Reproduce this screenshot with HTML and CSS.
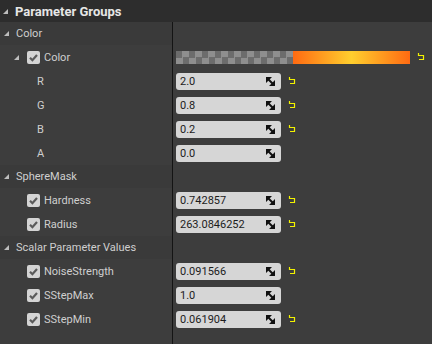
FILE: index.html
```html
<!DOCTYPE html>
<html lang="en">
<head>
    <meta charset="UTF-8">
    <title>Parameter Groups</title>
    <link rel="stylesheet" href="styles.css">
</head>
<body>
    <div class="panel">
        <div class="header"><span class="arrow"></span>Parameter Groups</div>
        <div class="tree">
            <div class="row category">
                <div class="name"><span class="arrow"></span>Color</div>
            </div>
            <div class="row">
                <div class="name sub"><span class="arrow"></span><span class="check"><svg viewBox="0 0 13 13" width="13" height="13"><path d="M3 6.8 L5.4 9.2 L10 4" fill="none" stroke="#5a5a5a" stroke-width="2.2"/></svg></span>Color</div>
                <div class="value">
                    <div class="swatch"><div class="checker"></div><div class="grad"></div></div>
                    <span class="reset"><svg viewBox="0 0 8 8" width="8" height="8"><path d="M1.5 0 V2.5 H6.5 V6.5 H2" fill="none" stroke="#f2f200" stroke-width="1.2"/></svg></span>
                </div>
            </div>
            <div class="row">
                <div class="name channel">R</div>
                <div class="value">
                    <div class="field">2.0<svg class="spin" viewBox="0 0 9 9" width="9" height="9"><path d="M0 0 H6 L0 6 Z M9 9 H3 L9 3 Z" fill="#111"/><path d="M1 1 L8 8" stroke="#111" stroke-width="2"/></svg></div>
                    <span class="reset"><svg viewBox="0 0 8 8" width="8" height="8"><path d="M1.5 0 V2.5 H6.5 V6.5 H2" fill="none" stroke="#f2f200" stroke-width="1.2"/></svg></span>
                </div>
            </div>
            <div class="row">
                <div class="name channel">G</div>
                <div class="value">
                    <div class="field">0.8<svg class="spin" viewBox="0 0 9 9" width="9" height="9"><path d="M0 0 H6 L0 6 Z M9 9 H3 L9 3 Z" fill="#111"/><path d="M1 1 L8 8" stroke="#111" stroke-width="2"/></svg></div>
                    <span class="reset"><svg viewBox="0 0 8 8" width="8" height="8"><path d="M1.5 0 V2.5 H6.5 V6.5 H2" fill="none" stroke="#f2f200" stroke-width="1.2"/></svg></span>
                </div>
            </div>
            <div class="row">
                <div class="name channel">B</div>
                <div class="value">
                    <div class="field">0.2<svg class="spin" viewBox="0 0 9 9" width="9" height="9"><path d="M0 0 H6 L0 6 Z M9 9 H3 L9 3 Z" fill="#111"/><path d="M1 1 L8 8" stroke="#111" stroke-width="2"/></svg></div>
                    <span class="reset"><svg viewBox="0 0 8 8" width="8" height="8"><path d="M1.5 0 V2.5 H6.5 V6.5 H2" fill="none" stroke="#f2f200" stroke-width="1.2"/></svg></span>
                </div>
            </div>
            <div class="row">
                <div class="name channel">A</div>
                <div class="value">
                    <div class="field">0.0<svg class="spin" viewBox="0 0 9 9" width="9" height="9"><path d="M0 0 H6 L0 6 Z M9 9 H3 L9 3 Z" fill="#111"/><path d="M1 1 L8 8" stroke="#111" stroke-width="2"/></svg></div>
                </div>
            </div>

            <div class="row category">
                <div class="name"><span class="arrow"></span>SphereMask</div>
            </div>
            <div class="row">
                <div class="name param"><span class="check"><svg viewBox="0 0 13 13" width="13" height="13"><path d="M3 6.8 L5.4 9.2 L10 4" fill="none" stroke="#5a5a5a" stroke-width="2.2"/></svg></span>Hardness</div>
                <div class="value">
                    <div class="field">0.742857<svg class="spin" viewBox="0 0 9 9" width="9" height="9"><path d="M0 0 H6 L0 6 Z M9 9 H3 L9 3 Z" fill="#111"/><path d="M1 1 L8 8" stroke="#111" stroke-width="2"/></svg></div>
                    <span class="reset"><svg viewBox="0 0 8 8" width="8" height="8"><path d="M1.5 0 V2.5 H6.5 V6.5 H2" fill="none" stroke="#f2f200" stroke-width="1.2"/></svg></span>
                </div>
            </div>
            <div class="row">
                <div class="name param"><span class="check"><svg viewBox="0 0 13 13" width="13" height="13"><path d="M3 6.8 L5.4 9.2 L10 4" fill="none" stroke="#5a5a5a" stroke-width="2.2"/></svg></span>Radius</div>
                <div class="value">
                    <div class="field">263.0846252<svg class="spin" viewBox="0 0 9 9" width="9" height="9"><path d="M0 0 H6 L0 6 Z M9 9 H3 L9 3 Z" fill="#111"/><path d="M1 1 L8 8" stroke="#111" stroke-width="2"/></svg></div>
                    <span class="reset"><svg viewBox="0 0 8 8" width="8" height="8"><path d="M1.5 0 V2.5 H6.5 V6.5 H2" fill="none" stroke="#f2f200" stroke-width="1.2"/></svg></span>
                </div>
            </div>

            <div class="row category">
                <div class="name"><span class="arrow"></span>Scalar Parameter Values</div>
            </div>
            <div class="row">
                <div class="name param"><span class="check"><svg viewBox="0 0 13 13" width="13" height="13"><path d="M3 6.8 L5.4 9.2 L10 4" fill="none" stroke="#5a5a5a" stroke-width="2.2"/></svg></span>NoiseStrength</div>
                <div class="value">
                    <div class="field">0.091566<svg class="spin" viewBox="0 0 9 9" width="9" height="9"><path d="M0 0 H6 L0 6 Z M9 9 H3 L9 3 Z" fill="#111"/><path d="M1 1 L8 8" stroke="#111" stroke-width="2"/></svg></div>
                    <span class="reset"><svg viewBox="0 0 8 8" width="8" height="8"><path d="M1.5 0 V2.5 H6.5 V6.5 H2" fill="none" stroke="#f2f200" stroke-width="1.2"/></svg></span>
                </div>
            </div>
            <div class="row">
                <div class="name param"><span class="check"><svg viewBox="0 0 13 13" width="13" height="13"><path d="M3 6.8 L5.4 9.2 L10 4" fill="none" stroke="#5a5a5a" stroke-width="2.2"/></svg></span>SStepMax</div>
                <div class="value">
                    <div class="field">1.0<svg class="spin" viewBox="0 0 9 9" width="9" height="9"><path d="M0 0 H6 L0 6 Z M9 9 H3 L9 3 Z" fill="#111"/><path d="M1 1 L8 8" stroke="#111" stroke-width="2"/></svg></div>
                </div>
            </div>
            <div class="row">
                <div class="name param"><span class="check"><svg viewBox="0 0 13 13" width="13" height="13"><path d="M3 6.8 L5.4 9.2 L10 4" fill="none" stroke="#5a5a5a" stroke-width="2.2"/></svg></span>SStepMin</div>
                <div class="value">
                    <div class="field">0.061904<svg class="spin" viewBox="0 0 9 9" width="9" height="9"><path d="M0 0 H6 L0 6 Z M9 9 H3 L9 3 Z" fill="#111"/><path d="M1 1 L8 8" stroke="#111" stroke-width="2"/></svg></div>
                    <span class="reset"><svg viewBox="0 0 8 8" width="8" height="8"><path d="M1.5 0 V2.5 H6.5 V6.5 H2" fill="none" stroke="#f2f200" stroke-width="1.2"/></svg></span>
                </div>
            </div>
        </div>
    </div>
</body>
</html>
```

FILE: styles.css
```css
body {
    margin: 0;
    background: #3d3d3d;
    font-family: Roboto, "Liberation Sans", sans-serif;
    font-size: 11px;
    color: #cfcfcf;
}
.panel {
    display: flex;
    flex-direction: column;
    height: 344px;
    overflow: hidden;
}
.header {
    height: 22px;
    display: flex;
    align-items: center;
    padding-left: 3px;
    background: #2d2d2d;
    color: #e6e6e6;
    font-size: 13px;
    font-weight: bold;
}
.header .arrow {
    margin-right: 7px;
}
.arrow {
    display: inline-block;
    width: 0;
    height: 0;
    border-style: solid;
    border-width: 0 0 5px 5px;
    border-color: transparent transparent #bdbdbd transparent;
}
.tree {
    flex: 1;
    background: linear-gradient(to right, transparent 172px, #141414 172px, #141414 173px, transparent 173px);
}
.row {
    display: flex;
    height: 24px;
    align-items: center;
}
.row.category {
    height: 23px;
    background: linear-gradient(to right, #3a3a3a 172px, #141414 172px, #141414 173px, #3d3d3d 173px);
}
.name {
    width: 172px;
    box-sizing: border-box;
    display: flex;
    align-items: center;
    flex-shrink: 0;
}
.category .name {
    padding-left: 4px;
}
.category .arrow {
    margin-right: 7px;
}
.name.sub {
    padding-left: 14px;
}
.name.sub .arrow {
    margin-right: 8px;
}
.name.param {
    padding-left: 27px;
}
.name.channel {
    padding-left: 37px;
}
.check {
    width: 13px;
    height: 13px;
    border-radius: 2px;
    background: #d4d4d4;
    margin-right: 4px;
    display: flex;
}
.value {
    display: flex;
    align-items: center;
    padding-left: 4px;
}
.field {
    width: 105px;
    height: 17px;
    box-sizing: border-box;
    border-radius: 3px;
    background: #d6d6d6;
    color: #1c1c1c;
    display: flex;
    align-items: center;
    justify-content: space-between;
    padding: 0 6px 0 4px;
}
.swatch {
    width: 234px;
    height: 13px;
    display: flex;
}
.checker {
    width: 117px;
    background: repeating-conic-gradient(#8e8e8e 0 25%, #6c6c6c 0 50%) 0 0 / 13px 13px;
}
.grad {
    flex: 1;
    background: linear-gradient(to right, #ff6a12, #ffcf2e 50%, #ff6a12);
}
.reset {
    display: flex;
    margin-left: 7px;
}
```
